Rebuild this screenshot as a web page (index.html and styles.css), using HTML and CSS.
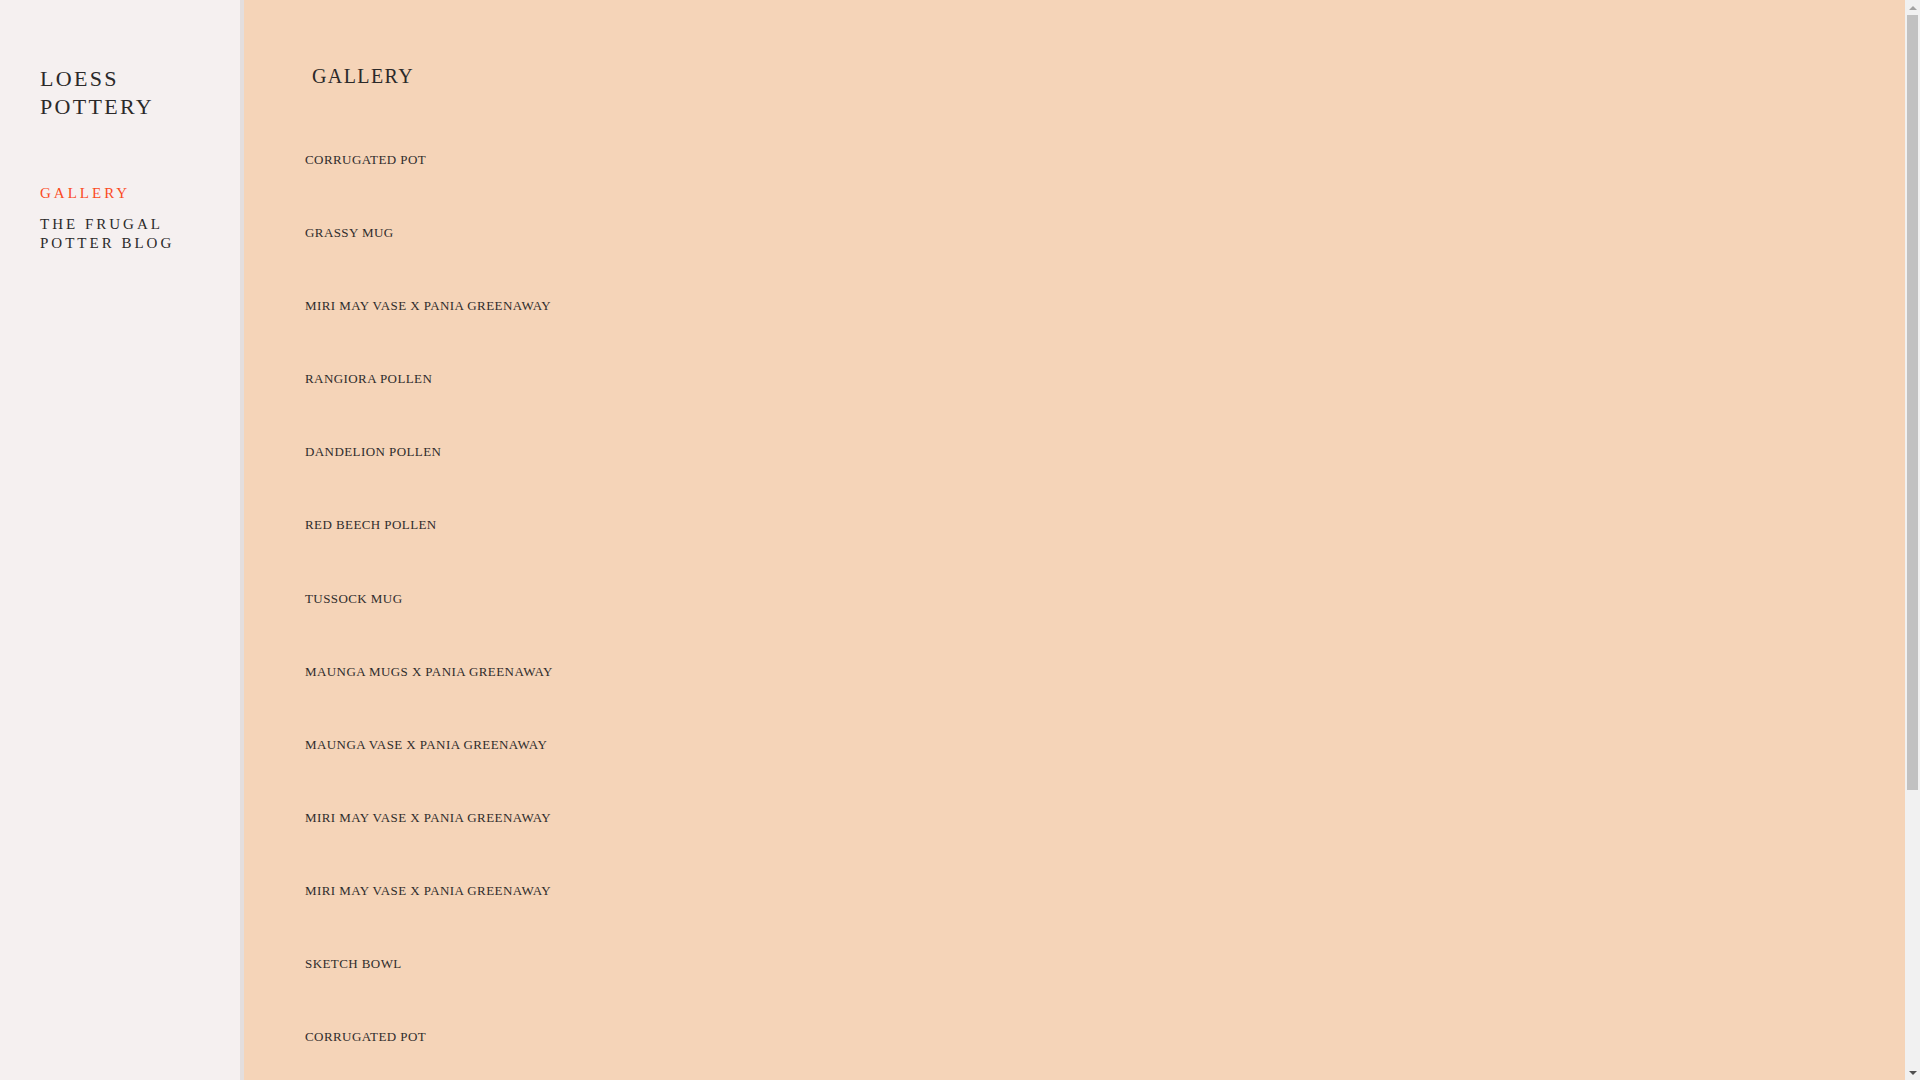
FILE: index.html
```html
<!DOCTYPE html>
<html lang="en">
<head>
<meta charset="utf-8">
<title>Gallery — Loess Pottery</title>
<link rel="stylesheet" href="styles.css">
</head>
<body>
<div class="window">
  <div class="page">
    <aside class="sidebar">
      <h1 class="site-title">LOESS<br>POTTERY</h1>
      <nav class="nav">
        <a class="nav-link active" href="#">GALLERY</a>
        <a class="nav-link" href="#">THE FRUGAL<br>POTTER BLOG</a>
      </nav>
    </aside>
    <main class="main">
      <h2 class="page-title">GALLERY</h2>
      <ul class="gallery">
        <li class="item">CORRUGATED POT</li>
        <li class="item">GRASSY MUG</li>
        <li class="item">MIRI MAY VASE X PANIA GREENAWAY</li>
        <li class="item">RANGIORA POLLEN</li>
        <li class="item">DANDELION POLLEN</li>
        <li class="item">RED BEECH POLLEN</li>
        <li class="item">TUSSOCK MUG</li>
        <li class="item">MAUNGA MUGS X PANIA GREENAWAY</li>
        <li class="item">MAUNGA VASE X PANIA GREENAWAY</li>
        <li class="item">MIRI MAY VASE X PANIA GREENAWAY</li>
        <li class="item">MIRI MAY VASE X PANIA GREENAWAY</li>
        <li class="item">SKETCH BOWL</li>
        <li class="item">CORRUGATED POT</li>
        <li class="item">GRASSY MUG</li>
        <li class="item">TUSSOCK MUG</li>
        <li class="item">RANGIORA POLLEN</li>
        <li class="item">DANDELION POLLEN</li>
        <li class="item">RED BEECH POLLEN</li>
      </ul>
    </main>
  </div>
  <div class="scrollbar" aria-hidden="true">
    <div class="sb-button"><span class="arrow-up"></span></div>
    <div class="sb-track">
      <div class="sb-thumb"></div>
    </div>
    <div class="sb-button"><span class="arrow-down"></span></div>
  </div>
</div>
</body>
</html>
```

FILE: styles.css
```css
html, body {
  margin: 0;
  padding: 0;
  height: 100%;
  overflow: hidden;
}

body {
  font-family: "Liberation Serif", "Times New Roman", serif;
  color: #2b2929;
  background: #f5d4b8;
}

.window {
  display: grid;
  grid-template-columns: 1fr 15px;
  height: 100vh;
}

.page {
  display: grid;
  grid-template-columns: 244px 1fr;
  height: 100vh;
  overflow-y: auto;
  scrollbar-width: none;
}

.page::-webkit-scrollbar {
  display: none;
}

.sidebar {
  background: #f5f0f0;
  border-right: 4px solid #e3dede;
  padding: 65px 20px 0 40px;
}

.site-title {
  margin: 0;
  font-size: 22px;
  line-height: 28px;
  font-weight: normal;
  letter-spacing: 2.3px;
}

.nav {
  margin-top: 63px;
  display: flex;
  flex-direction: column;
  gap: 12px;
}

.nav-link {
  display: block;
  color: #2b2929;
  text-decoration: none;
  font-size: 15px;
  line-height: 19px;
  letter-spacing: 3px;
}

.nav-link.active {
  color: #fb4a1e;
}

.main {
  background: #f5d4b8;
  padding: 64px 0 56px 61px;
}

.page-title {
  margin: 0 0 0 7px;
  font-size: 20px;
  line-height: 24px;
  font-weight: normal;
  letter-spacing: 1.4px;
}

.gallery {
  list-style: none;
  margin: 64px 0 0 0;
  padding: 0;
  display: flex;
  flex-direction: column;
  gap: 57.1px;
}

.item {
  font-size: 13px;
  line-height: 16px;
  letter-spacing: 0.42px;
  color: #2f2c2c;
}

/* scrollbar */
.scrollbar {
  background: #f1f1f1;
  display: flex;
  flex-direction: column;
  height: 100vh;
}

.sb-button {
  height: 15px;
  flex: none;
  display: flex;
  align-items: center;
  justify-content: center;
}

.arrow-up {
  width: 0;
  height: 0;
  border-left: 4px solid transparent;
  border-right: 4px solid transparent;
  border-bottom: 4px solid #a3a3a3;
}

.arrow-down {
  width: 0;
  height: 0;
  border-left: 4px solid transparent;
  border-right: 4px solid transparent;
  border-top: 4px solid #505050;
}

.sb-track {
  flex: 1;
  padding: 0 2px;
}

.sb-thumb {
  height: 775px;
  background: #c1c1c1;
}
```
